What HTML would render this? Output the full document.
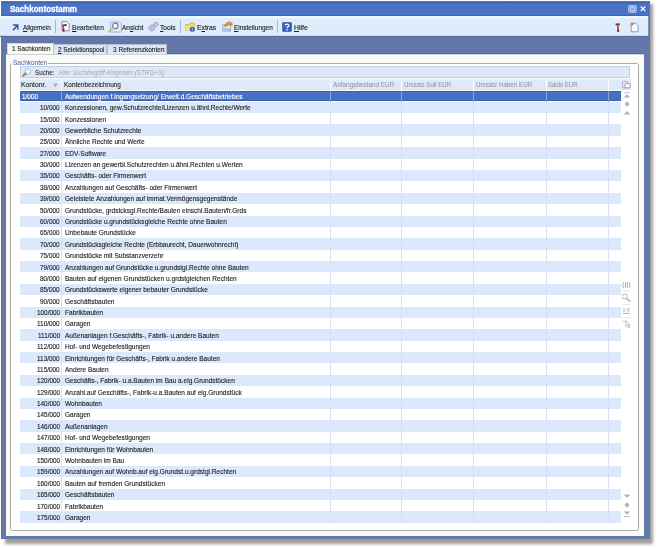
<!DOCTYPE html>
<html><head><meta charset="utf-8">
<style>
*{margin:0;padding:0;box-sizing:border-box}
html,body{width:658px;height:548px;overflow:hidden;background:#fff;font-family:"Liberation Sans",sans-serif}
.a{position:absolute}
.tx{position:absolute;white-space:nowrap;font-size:7px;line-height:normal;transform-origin:0 0;-webkit-text-stroke:0.13px currentColor}
#shadow{position:absolute;left:4.5px;top:4.2px;width:648.6px;height:539.6px;background:rgba(70,62,60,.5);filter:blur(1.8px)}
#win{position:absolute;left:1.3px;top:1.3px;width:648.4px;height:538.2px;background:#6378a8}
#title{position:absolute;left:1.3px;top:1.6px;width:648px;height:14.4px;background:linear-gradient(#3e62ac 0,#3e62ac 1px,#4774c8 1.6px,#4873c7 12.8px,#3f64aa 13.6px,#4266ae 14.4px)}
#tb{position:absolute;left:0;top:16px;width:649.3px;height:21px;background:linear-gradient(#eef9ff 0,#f0fbff 1.6px,#deecfc 2.6px,#deecfc 18.4px,#e8f9ff 19.2px,#5a6e9f 20.4px,#586c9e 21px)}
.sep{position:absolute;width:1px;background:#aab6ca}
#panel{position:absolute;left:6.2px;top:53px;width:638px;height:483.1px;background:linear-gradient(#58698f 0,#58698f 0.8px,#fdfefd 1.8px,#fbfbf5 3.2px,#fbfaf4 100%)}
.tab{position:absolute;background:linear-gradient(#d9e3f3,#e3eaf7);border:1px solid #b3c1d8;border-bottom:none}
#tab1{background:#fbfaf5;border:1px solid #cfd6e0;border-bottom:none}
#grp{position:absolute;left:10.4px;top:63.3px;width:628.2px;height:467.4px;border:1px solid #aaacaa;border-radius:2.5px;background:#fff}
#grpcover{position:absolute;left:12.3px;top:59px;width:35.8px;height:4.8px;background:#fcfbf7}
#search{position:absolute;left:19.8px;top:66.4px;width:610px;height:11.4px;background:#dfe8f6;border:1px solid #c1d1ea}
#hdr{position:absolute;left:20.1px;top:77.8px;width:611px;height:12.7px;background:linear-gradient(#f4f9ff 0,#f4f9ff 0.8px,#dfeafa 2px,#dce8f9 100%)}
.hv{position:absolute;top:78.6px;width:1px;height:11.6px;background:#fbfdff}
#gridbg{position:absolute;left:20.1px;top:90.5px;width:601.1px;height:432.9px;background:#fff}
.rodd{position:absolute;left:20.1px;width:601.1px;height:11.38px;background:#dce9fc}
.rsel{position:absolute;left:20.1px;width:601.1px;background:#4571c5;border-top:1px solid #3a5eac;border-bottom:1px solid #3a5eac}
.vl{position:absolute;top:90.5px;width:0.9px;background:#d6e2f4}
.vls{position:absolute;top:90.5px;width:1px;background:#8aa6dc}
u{text-decoration:underline;text-underline-offset:1px;text-decoration-thickness:0.6px}

</style></head><body>
<div id="shadow"></div>
<div id="win"></div>
<div id="title"></div>
<svg class="a" style="left:627.6px;top:4.8px" width="9" height="8" viewBox="0 0 9 8"><rect x="0.5" y="0.5" width="7.8" height="7" rx="1" fill="#86a3dc" stroke="#b9cbef" stroke-width="0.9"/><rect x="2.4" y="2.3" width="4" height="3.4" rx="1.3" fill="none" stroke="#dfe8fa" stroke-width="0.9"/></svg>
<svg class="a" style="left:639.9px;top:6.3px" width="6" height="5.5" viewBox="0 0 6 5.5"><path d="M0.7 0.5 L5.3 5 M5.3 0.5 L0.7 5" stroke="#fff" stroke-width="1.05"/></svg>
<div id="tb"></div>
<div class="a" style="left:648.4px;top:16px;width:1px;height:20px;background:#7b90bf"></div>
<div class="sep" style="left:55.2px;top:19.5px;height:13.3px"></div>
<div class="sep" style="left:180.2px;top:19.5px;height:13.3px"></div>
<div class="sep" style="left:277.2px;top:19.5px;height:13.3px"></div>
<!-- arrow icon -->
<svg class="a" style="left:12.4px;top:23.6px" width="7.5" height="7" viewBox="0 0 7.5 7"><path d="M0.5 0.3 H6.6 V6.2 L5 5.2 V1.9 H1.6 Z" fill="#3d60b6"/><path d="M5.2 1.7 L1 6.2" stroke="#2f4b94" stroke-width="1.5"/></svg>
<!-- bearbeiten icon -->
<svg class="a" style="left:60.6px;top:21.3px" width="9" height="11" viewBox="0 0 9 11"><path d="M1 0.6 H5.8 L8.2 3 V9.8 H1 Z" fill="#fafcff" stroke="#7d8aa4" stroke-width="0.9"/><path d="M1.2 4.2 H4.4" stroke="#3e3e3e" stroke-width="1.4"/><circle cx="4.6" cy="4" r="1" fill="#222"/><path d="M2.2 4.8 L2.6 10.2" stroke="#c9452c" stroke-width="1.7" stroke-linecap="round"/><path d="M2.45 8 L2.6 10.2" stroke="#8e2a1a" stroke-width="1.5"/></svg>
<!-- ansicht icon -->
<svg class="a" style="left:106.5px;top:20.5px" width="15" height="12" viewBox="0 0 15 12"><path d="M3.6 1 H12.4 L14.4 3 V11 H3.6 Z" fill="#e4eaf7" stroke="#a2aed0" stroke-width="0.9"/><circle cx="8.3" cy="4.9" r="2.7" fill="#f6f9ff" stroke="#6e7b9e" stroke-width="1.2"/><path d="M5.8 7.4 L2.4 10.3" stroke="#d5be76" stroke-width="2.6" stroke-linecap="round"/></svg>
<!-- tools icon -->
<svg class="a" style="left:147.8px;top:21.8px" width="11" height="10" viewBox="0 0 11 10"><circle cx="3.9" cy="5.9" r="3" fill="#c9c6e4" stroke="#8c88b4" stroke-width="0.9" stroke-dasharray="1.3 0.7"/><circle cx="3.9" cy="5.9" r="0.8" fill="#9995c0"/><circle cx="8" cy="2.3" r="1.9" fill="#dcdaf0" stroke="#8985b2" stroke-width="1.1" stroke-dasharray="1.1 0.5"/></svg>
<!-- extras icon -->
<svg class="a" style="left:184.8px;top:21.6px" width="10.5" height="10" viewBox="0 0 10.5 10"><path d="M0.5 2.5 H3.8 L4.8 1.2 H9.5 V8.6 H0.5 Z" fill="#f2d36a" stroke="#d2ac3c" stroke-width="0.7"/><path d="M0.5 4 H9.5 V8.6 H0.5Z" fill="#f7e08a"/><circle cx="7.3" cy="7.2" r="2.5" fill="#1f62c9"/><path d="M7.3 6.2 V8.3" stroke="#fff" stroke-width="0.8"/></svg>
<!-- einstellungen icon -->
<svg class="a" style="left:221.5px;top:21.4px" width="11" height="10.5" viewBox="0 0 11 10.5"><rect x="0.8" y="3.8" width="7.8" height="6.2" fill="#e9eef8" stroke="#8a97b2" stroke-width="0.8"/><rect x="1.4" y="7.2" width="6.6" height="2.4" fill="#a9c0e6"/><path d="M2.6 5.6 C3.2 2.6 5.2 0.9 7.4 1 C9.2 1.1 10.3 2.3 10.6 3.6 L9.6 4.2 C8 3.2 5.5 3.8 3.6 5.8 Z" fill="#dc9a22" stroke="#9b6a14" stroke-width="0.5"/></svg>
<!-- hilfe icon -->
<svg class="a" style="left:282px;top:21.8px" width="10" height="10" viewBox="0 0 10 10"><rect x="0.4" y="0.4" width="9.2" height="9.2" rx="1" fill="#3561b8" stroke="#284e9c" stroke-width="0.6"/><path d="M3.3 3.6 C3.3 1.6 6.8 1.6 6.8 3.5 C6.8 4.8 5 4.9 5 6.2" fill="none" stroke="#fff" stroke-width="1.3"/><rect x="4.35" y="7.1" width="1.3" height="1.3" fill="#fff"/></svg>
<!-- right toolbar icons -->
<svg class="a" style="left:614.6px;top:22.6px" width="6" height="9.5" viewBox="0 0 6 9.5"><path d="M0.6 1.4 H4.8" stroke="#3c3c3c" stroke-width="1.9"/><path d="M2.8 2.2 L3.3 8.8" stroke="#c9502c" stroke-width="1.8" stroke-linecap="round"/><path d="M3 6.5 L3.3 8.8" stroke="#8a2a18" stroke-width="1.6"/></svg>
<svg class="a" style="left:629.5px;top:22.2px" width="9" height="10.5" viewBox="0 0 9 10.5"><path d="M1.2 1.2 H5.6 L8.2 3.8 V9.8 H1.2 Z" fill="#f4f8ff" stroke="#7f93b8" stroke-width="0.9"/><circle cx="2.2" cy="2" r="1.6" fill="#e8852a"/></svg>
<div id="panel"></div>
<div class="tab" id="tab1" style="left:6.5px;top:42.5px;width:47px;height:11.6px"></div>
<div class="tab" style="left:53.4px;top:44px;width:54px;height:10px"></div>
<div class="tab" style="left:107.3px;top:44px;width:60px;height:10px"></div>
<div id="grp"></div>
<div id="grpcover"></div>
<div id="search"></div>
<svg class="a" style="left:21.8px;top:68.4px" width="9.5" height="8.5" viewBox="0 0 9.5 8.5"><circle cx="5.6" cy="3.6" r="2.9" fill="#eef8fd" stroke="#8fb0c8" stroke-width="0.8"/><path d="M6.6 1.6 A2.2 2.2 0 0 1 7.4 4.6" fill="none" stroke="#ffffff" stroke-width="0.8"/><path d="M3.6 5.6 L1.3 7.7" stroke="#b7864f" stroke-width="2.3" stroke-linecap="round"/></svg>
<div id="hdr"></div>
<div id="gridbg"></div>
<svg class="a" style="left:52.6px;top:83.3px" width="5" height="4.5" viewBox="0 0 5 4.5"><path d="M0.2 0.4 H4.8 L2.5 4.2 Z" fill="#a4a8ae"/></svg>
<svg class="a" style="left:621.8px;top:81px" width="9" height="7.5" viewBox="0 0 9 7.5"><rect x="0.6" y="0.6" width="5" height="6.2" rx="0.8" fill="#eef0f4" stroke="#9a9a9a" stroke-width="0.8"/><rect x="3" y="2.6" width="5.2" height="4.2" rx="0.6" fill="#fdfdfd" stroke="#858585" stroke-width="0.8"/></svg>
<!-- nav buttons top -->
<svg class="a" style="left:622.5px;top:91.7px" width="8" height="6" viewBox="0 0 8 6"><path d="M1 0.8 H7" stroke="#b8b8b8" stroke-width="0.9"/><path d="M0.8 5.4 L4 2.2 L7.2 5.4 Z" fill="#b0b0b0"/></svg>
<svg class="a" style="left:622.5px;top:101.2px" width="8" height="6" viewBox="0 0 8 6"><path d="M4 0.3 L6.5 3 L4 5.7 L1.5 3 Z" fill="#b0b0b0"/></svg>
<svg class="a" style="left:622.5px;top:109.8px" width="8" height="5" viewBox="0 0 8 5"><path d="M0.8 4.4 L4 1 L7.2 4.4 Z" fill="#b0b0b0"/></svg>
<!-- mid icons -->
<svg class="a" style="left:622.2px;top:281.2px" width="9" height="48" viewBox="0 0 9 48"><path d="M1.6 1 C0.7 2.5 0.7 5.5 1.6 7 M7.2 1 C8.1 2.5 8.1 5.5 7.2 7 M3.5 1.2 V6.8 M5.3 1.2 V6.8" fill="none" stroke="#b0b0b0" stroke-width="1"/><path d="M0.5 10.1 H8.2" stroke="#d8d8d8" stroke-width="0.6"/><circle cx="2.8" cy="15.4" r="2.5" fill="none" stroke="#b0b0b0" stroke-width="0.9"/><path d="M4.6 17.2 L8.2 20.8" stroke="#aaaaaa" stroke-width="1.3"/><path d="M0.5 23.5 H8.2" stroke="#e2d0d0" stroke-width="0.6"/><path d="M1 28 H3.4 M4.6 28 H7.8 M1 30 H3.4 M4.6 30 H7.8 M1 32.4 H7.8" fill="none" stroke="#b8b8b8" stroke-width="1"/><path d="M0.5 36.8 H8.2" stroke="#d8d8d8" stroke-width="0.6"/><path d="M0.8 40.2 H5.4 L3.8 42.4 V46 M5.2 43 H8.2 M5.2 44.6 H8.2 M5.2 46.2 H8.2" fill="none" stroke="#b4b4b4" stroke-width="0.9"/></svg>
<!-- nav buttons bottom -->
<svg class="a" style="left:622.5px;top:493.5px" width="8" height="5" viewBox="0 0 8 5"><path d="M0.8 0.6 L4 4 L7.2 0.6 Z" fill="#b0b0b0"/></svg>
<svg class="a" style="left:622.5px;top:502.2px" width="8" height="6" viewBox="0 0 8 6"><path d="M4 0.3 L6.5 3 L4 5.7 L1.5 3 Z" fill="#b0b0b0"/></svg>
<svg class="a" style="left:622.5px;top:510.8px" width="8" height="6.5" viewBox="0 0 8 6.5"><path d="M0.8 0.6 L4 3.8 L7.2 0.6 Z" fill="#b0b0b0"/><path d="M1 5.6 H7" stroke="#b0b0b0" stroke-width="0.9"/></svg>

<div class="rsel" style="top:90.5px;height:10.72px"></div><div class="rodd" style="top:101.72px"></div><div class="rodd" style="top:124.48px"></div><div class="rodd" style="top:147.24px"></div><div class="rodd" style="top:170.00px"></div><div class="rodd" style="top:192.76px"></div><div class="rodd" style="top:215.52px"></div><div class="rodd" style="top:238.28px"></div><div class="rodd" style="top:261.04px"></div><div class="rodd" style="top:283.80px"></div><div class="rodd" style="top:306.56px"></div><div class="rodd" style="top:329.32px"></div><div class="rodd" style="top:352.08px"></div><div class="rodd" style="top:374.84px"></div><div class="rodd" style="top:397.60px"></div><div class="rodd" style="top:420.36px"></div><div class="rodd" style="top:443.12px"></div><div class="rodd" style="top:465.88px"></div><div class="rodd" style="top:488.64px"></div><div class="rodd" style="top:511.40px"></div>
<div class="vl" style="left:61.1px;height:432.3px"></div><div class="vl" style="left:329.8px;height:432.3px"></div><div class="vl" style="left:401.3px;height:432.3px"></div><div class="vl" style="left:473.4px;height:432.3px"></div><div class="vl" style="left:545.5px;height:432.3px"></div><div class="vl" style="left:607.9px;height:432.3px"></div>
<div class="vls" style="left:61.1px;height:11.22px"></div><div class="vls" style="left:329.8px;height:11.22px"></div><div class="vls" style="left:401.3px;height:11.22px"></div><div class="vls" style="left:473.4px;height:11.22px"></div><div class="vls" style="left:545.5px;height:11.22px"></div><div class="vls" style="left:607.9px;height:11.22px"></div>
<div class="hv" style="left:61.1px"></div><div class="hv" style="left:329.8px"></div><div class="hv" style="left:401.3px"></div><div class="hv" style="left:473.4px"></div><div class="hv" style="left:545.5px"></div><div class="hv" style="left:607.9px"></div>
<span class="tx" style="left:10.14px;top:4.88px;font-size:8.2px;color:#ffffff;transform:scaleX(0.9820);font-weight:bold;-webkit-text-stroke:0.3px #fff">Sachkontostamm</span><span class="tx" style="left:22.54px;top:23.86px;font-size:7.0px;color:#1e1e1e;transform:scaleX(0.9015);"><u>A</u>llgemein</span><span class="tx" style="left:72.12px;top:23.86px;font-size:7.0px;color:#1e1e1e;transform:scaleX(0.9403);"><u>B</u>earbeiten</span><span class="tx" style="left:121.63px;top:23.86px;font-size:7.0px;color:#1e1e1e;transform:scaleX(0.9292);">An<u>s</u>icht</span><span class="tx" style="left:160.12px;top:23.86px;font-size:7.0px;color:#1e1e1e;transform:scaleX(0.9522);"><u>T</u>ools</span><span class="tx" style="left:197.11px;top:23.86px;font-size:7.0px;color:#1e1e1e;transform:scaleX(0.9714);">E<u>x</u>tras</span><span class="tx" style="left:233.63px;top:23.86px;font-size:7.0px;color:#1e1e1e;transform:scaleX(0.9213);"><u>E</u>instellungen</span><span class="tx" style="left:293.61px;top:23.86px;font-size:7.0px;color:#1e1e1e;transform:scaleX(0.9837);"><u>H</u>ilfe</span><span class="tx" style="left:11.74px;top:44.95px;font-size:6.8px;color:#1e1e1e;transform:scaleX(0.9289);">1 Sachkonten</span><span class="tx" style="left:58.24px;top:45.65px;font-size:6.8px;color:#1e1e1e;transform:scaleX(0.9325);"><u>2</u> Selektionspool</span><span class="tx" style="left:112.63px;top:45.65px;font-size:6.8px;color:#1e1e1e;transform:scaleX(0.9607);">3 Referenzkonten</span><span class="tx" style="left:12.83px;top:58.55px;font-size:6.8px;color:#5068aa;transform:scaleX(0.9508);-webkit-text-stroke:0.05px #5068aa">Sachkonten</span><span class="tx" style="left:34.54px;top:68.95px;font-size:6.8px;color:#202020;transform:scaleX(0.9218);-webkit-text-stroke:0.05px #202020">Suche:</span><span class="tx" style="left:58.64px;top:68.95px;font-size:6.8px;color:#a3abb9;transform:scaleX(0.9388);font-style:italic;-webkit-text-stroke:0">Hier Suchbegriff eingeben (STRG+S)</span><span class="tx" style="left:21.01px;top:80.85px;font-size:6.8px;color:#2a2a2a;transform:scaleX(1.0020);">Kontonr.</span><span class="tx" style="left:64.13px;top:80.95px;font-size:6.8px;color:#2a2a2a;transform:scaleX(0.9475);">Kontenbezeichnung</span><span class="tx" style="left:333.04px;top:80.85px;font-size:6.8px;color:#949494;transform:scaleX(0.9381);-webkit-text-stroke:0.05px #949494">Anfangsbestand EUR</span><span class="tx" style="left:404.45px;top:80.85px;font-size:6.8px;color:#949494;transform:scaleX(0.8971);-webkit-text-stroke:0.05px #949494">Umsatz Soll EUR</span><span class="tx" style="left:476.44px;top:80.85px;font-size:6.8px;color:#949494;transform:scaleX(0.9185);-webkit-text-stroke:0.05px #949494">Umsatz Haben EUR</span><span class="tx" style="left:548.46px;top:80.85px;font-size:6.8px;color:#949494;transform:scaleX(0.8798);-webkit-text-stroke:0.05px #949494">Saldo EUR</span>
<span class="tx" style="left:22.25px;top:91.83px;font-size:7.3px;color:#ffffff;transform:scaleX(0.8774)">1/000</span><span class="tx" style="left:64.74px;top:91.83px;font-size:7.3px;color:#ffffff;transform:scaleX(0.8966)">Aufwendungen f.Ingangsetzung/ Erweit.d.Geschäftsbetriebes</span><span class="tx" style="left:40.46px;top:103.21px;font-size:7.3px;color:#1e1e1e;transform:scaleX(0.8774)">10/000</span><span class="tx" style="left:64.74px;top:103.21px;font-size:7.3px;color:#1e1e1e;transform:scaleX(0.8966)">Konzessionen, gew.Schutzrechte/Lizenzen u.ähnl.Rechte/Werte</span><span class="tx" style="left:40.46px;top:114.59px;font-size:7.3px;color:#1e1e1e;transform:scaleX(0.8774)">15/000</span><span class="tx" style="left:64.74px;top:114.59px;font-size:7.3px;color:#1e1e1e;transform:scaleX(0.8966)">Konzessionen</span><span class="tx" style="left:40.46px;top:125.97px;font-size:7.3px;color:#1e1e1e;transform:scaleX(0.8774)">20/000</span><span class="tx" style="left:64.74px;top:125.97px;font-size:7.3px;color:#1e1e1e;transform:scaleX(0.8966)">Gewerbliche Schutzrechte</span><span class="tx" style="left:40.46px;top:137.35px;font-size:7.3px;color:#1e1e1e;transform:scaleX(0.8774)">25/000</span><span class="tx" style="left:64.74px;top:137.35px;font-size:7.3px;color:#1e1e1e;transform:scaleX(0.8966)">Ähnliche Rechte und Werte</span><span class="tx" style="left:40.46px;top:148.73px;font-size:7.3px;color:#1e1e1e;transform:scaleX(0.8774)">27/000</span><span class="tx" style="left:64.74px;top:148.73px;font-size:7.3px;color:#1e1e1e;transform:scaleX(0.8966)">EDV-Software</span><span class="tx" style="left:40.46px;top:160.11px;font-size:7.3px;color:#1e1e1e;transform:scaleX(0.8774)">30/000</span><span class="tx" style="left:64.74px;top:160.11px;font-size:7.3px;color:#1e1e1e;transform:scaleX(0.8966)">Lizenzen an gewerbl.Schutzrechten u.ähnl.Rechten u.Werten</span><span class="tx" style="left:40.46px;top:171.49px;font-size:7.3px;color:#1e1e1e;transform:scaleX(0.8774)">35/000</span><span class="tx" style="left:64.74px;top:171.49px;font-size:7.3px;color:#1e1e1e;transform:scaleX(0.8966)">Geschäfts- oder Firmenwert</span><span class="tx" style="left:40.46px;top:182.87px;font-size:7.3px;color:#1e1e1e;transform:scaleX(0.8774)">38/000</span><span class="tx" style="left:64.74px;top:182.87px;font-size:7.3px;color:#1e1e1e;transform:scaleX(0.8966)">Anzahlungen auf Geschäfts- oder Firmenwert</span><span class="tx" style="left:40.46px;top:194.25px;font-size:7.3px;color:#1e1e1e;transform:scaleX(0.8774)">39/000</span><span class="tx" style="left:64.74px;top:194.25px;font-size:7.3px;color:#1e1e1e;transform:scaleX(0.8966)">Geleistete Anzahlungen auf immat.Vermögensgegenstände</span><span class="tx" style="left:40.46px;top:205.63px;font-size:7.3px;color:#1e1e1e;transform:scaleX(0.8774)">50/000</span><span class="tx" style="left:64.74px;top:205.63px;font-size:7.3px;color:#1e1e1e;transform:scaleX(0.8966)">Grundstücke, grdstcksgl.Rechte/Bauten einschl.Bauten/fr.Grds</span><span class="tx" style="left:40.46px;top:217.01px;font-size:7.3px;color:#1e1e1e;transform:scaleX(0.8774)">60/000</span><span class="tx" style="left:64.74px;top:217.01px;font-size:7.3px;color:#1e1e1e;transform:scaleX(0.8966)">Grundstücke u.grundstücksgleiche Rechte ohne Bauten</span><span class="tx" style="left:40.46px;top:228.39px;font-size:7.3px;color:#1e1e1e;transform:scaleX(0.8774)">65/000</span><span class="tx" style="left:64.74px;top:228.39px;font-size:7.3px;color:#1e1e1e;transform:scaleX(0.8966)">Unbebaute Grundstücke</span><span class="tx" style="left:40.46px;top:239.77px;font-size:7.3px;color:#1e1e1e;transform:scaleX(0.8774)">70/000</span><span class="tx" style="left:64.74px;top:239.77px;font-size:7.3px;color:#1e1e1e;transform:scaleX(0.8966)">Grundstücksgleiche Rechte (Erbbaurecht, Dauerwohnrecht)</span><span class="tx" style="left:40.46px;top:251.15px;font-size:7.3px;color:#1e1e1e;transform:scaleX(0.8774)">75/000</span><span class="tx" style="left:64.74px;top:251.15px;font-size:7.3px;color:#1e1e1e;transform:scaleX(0.8966)">Grundstücke mit Substanzverzehr</span><span class="tx" style="left:40.46px;top:262.53px;font-size:7.3px;color:#1e1e1e;transform:scaleX(0.8774)">79/000</span><span class="tx" style="left:64.74px;top:262.53px;font-size:7.3px;color:#1e1e1e;transform:scaleX(0.8966)">Anzahlungen auf Grundstücke u.grundstgl.Rechte ohne Bauten</span><span class="tx" style="left:40.46px;top:273.91px;font-size:7.3px;color:#1e1e1e;transform:scaleX(0.8774)">80/000</span><span class="tx" style="left:64.74px;top:273.91px;font-size:7.3px;color:#1e1e1e;transform:scaleX(0.8966)">Bauten auf eigenen Grundstücken u.grdstgleichen Rechten</span><span class="tx" style="left:40.46px;top:285.29px;font-size:7.3px;color:#1e1e1e;transform:scaleX(0.8774)">85/000</span><span class="tx" style="left:64.74px;top:285.29px;font-size:7.3px;color:#1e1e1e;transform:scaleX(0.8966)">Grundstückswerte eigener bebauter Grundstücke</span><span class="tx" style="left:40.46px;top:296.67px;font-size:7.3px;color:#1e1e1e;transform:scaleX(0.8774)">90/000</span><span class="tx" style="left:64.74px;top:296.67px;font-size:7.3px;color:#1e1e1e;transform:scaleX(0.8966)">Geschäftsbauten</span><span class="tx" style="left:36.90px;top:308.05px;font-size:7.3px;color:#1e1e1e;transform:scaleX(0.8774)">100/000</span><span class="tx" style="left:64.74px;top:308.05px;font-size:7.3px;color:#1e1e1e;transform:scaleX(0.8966)">Fabrikbauten</span><span class="tx" style="left:37.38px;top:319.43px;font-size:7.3px;color:#1e1e1e;transform:scaleX(0.8774)">110/000</span><span class="tx" style="left:64.74px;top:319.43px;font-size:7.3px;color:#1e1e1e;transform:scaleX(0.8966)">Garagen</span><span class="tx" style="left:37.86px;top:330.81px;font-size:7.3px;color:#1e1e1e;transform:scaleX(0.8774)">111/000</span><span class="tx" style="left:64.74px;top:330.81px;font-size:7.3px;color:#1e1e1e;transform:scaleX(0.8966)">Außenanlagen f.Geschäfts-, Fabrik- u.andere Bauten</span><span class="tx" style="left:37.38px;top:342.19px;font-size:7.3px;color:#1e1e1e;transform:scaleX(0.8774)">112/000</span><span class="tx" style="left:64.74px;top:342.19px;font-size:7.3px;color:#1e1e1e;transform:scaleX(0.8966)">Hof- und Wegebefestigungen</span><span class="tx" style="left:37.38px;top:353.57px;font-size:7.3px;color:#1e1e1e;transform:scaleX(0.8774)">113/000</span><span class="tx" style="left:64.74px;top:353.57px;font-size:7.3px;color:#1e1e1e;transform:scaleX(0.8966)">Einrichtungen für Geschäfts-, Fabrik u.andere Bauten</span><span class="tx" style="left:37.38px;top:364.95px;font-size:7.3px;color:#1e1e1e;transform:scaleX(0.8774)">115/000</span><span class="tx" style="left:64.74px;top:364.95px;font-size:7.3px;color:#1e1e1e;transform:scaleX(0.8966)">Andere Bauten</span><span class="tx" style="left:36.90px;top:376.33px;font-size:7.3px;color:#1e1e1e;transform:scaleX(0.8774)">120/000</span><span class="tx" style="left:64.74px;top:376.33px;font-size:7.3px;color:#1e1e1e;transform:scaleX(0.8966)">Geschäfts-, Fabrik- u.a.Bauten im Bau a.eig.Grundstücken</span><span class="tx" style="left:36.90px;top:387.71px;font-size:7.3px;color:#1e1e1e;transform:scaleX(0.8774)">129/000</span><span class="tx" style="left:64.74px;top:387.71px;font-size:7.3px;color:#1e1e1e;transform:scaleX(0.8966)">Anzahl.auf Geschäfts-, Fabrik-u.a.Bauten auf eig.Grundstück</span><span class="tx" style="left:36.90px;top:399.09px;font-size:7.3px;color:#1e1e1e;transform:scaleX(0.8774)">140/000</span><span class="tx" style="left:64.74px;top:399.09px;font-size:7.3px;color:#1e1e1e;transform:scaleX(0.8966)">Wohnbauten</span><span class="tx" style="left:36.90px;top:410.47px;font-size:7.3px;color:#1e1e1e;transform:scaleX(0.8774)">145/000</span><span class="tx" style="left:64.74px;top:410.47px;font-size:7.3px;color:#1e1e1e;transform:scaleX(0.8966)">Garagen</span><span class="tx" style="left:36.90px;top:421.85px;font-size:7.3px;color:#1e1e1e;transform:scaleX(0.8774)">146/000</span><span class="tx" style="left:64.74px;top:421.85px;font-size:7.3px;color:#1e1e1e;transform:scaleX(0.8966)">Außenanlagen</span><span class="tx" style="left:36.90px;top:433.23px;font-size:7.3px;color:#1e1e1e;transform:scaleX(0.8774)">147/000</span><span class="tx" style="left:64.74px;top:433.23px;font-size:7.3px;color:#1e1e1e;transform:scaleX(0.8966)">Hof- und Wegebefestigungen</span><span class="tx" style="left:36.90px;top:444.61px;font-size:7.3px;color:#1e1e1e;transform:scaleX(0.8774)">148/000</span><span class="tx" style="left:64.74px;top:444.61px;font-size:7.3px;color:#1e1e1e;transform:scaleX(0.8966)">Einrichtungen für Wohnbauten</span><span class="tx" style="left:36.90px;top:455.99px;font-size:7.3px;color:#1e1e1e;transform:scaleX(0.8774)">150/000</span><span class="tx" style="left:64.74px;top:455.99px;font-size:7.3px;color:#1e1e1e;transform:scaleX(0.8966)">Wohnbauten im Bau</span><span class="tx" style="left:36.90px;top:467.37px;font-size:7.3px;color:#1e1e1e;transform:scaleX(0.8774)">159/000</span><span class="tx" style="left:64.74px;top:467.37px;font-size:7.3px;color:#1e1e1e;transform:scaleX(0.8966)">Anzahlungen auf Wohnb.auf eig.Grundst.u.grdstgl.Rechten</span><span class="tx" style="left:36.90px;top:478.75px;font-size:7.3px;color:#1e1e1e;transform:scaleX(0.8774)">160/000</span><span class="tx" style="left:64.74px;top:478.75px;font-size:7.3px;color:#1e1e1e;transform:scaleX(0.8966)">Bauten auf fremden Grundstücken</span><span class="tx" style="left:36.90px;top:490.13px;font-size:7.3px;color:#1e1e1e;transform:scaleX(0.8774)">165/000</span><span class="tx" style="left:64.74px;top:490.13px;font-size:7.3px;color:#1e1e1e;transform:scaleX(0.8966)">Geschäftsbauten</span><span class="tx" style="left:36.90px;top:501.51px;font-size:7.3px;color:#1e1e1e;transform:scaleX(0.8774)">170/000</span><span class="tx" style="left:64.74px;top:501.51px;font-size:7.3px;color:#1e1e1e;transform:scaleX(0.8966)">Fabrikbauten</span><span class="tx" style="left:36.90px;top:512.89px;font-size:7.3px;color:#1e1e1e;transform:scaleX(0.8774)">175/000</span><span class="tx" style="left:64.74px;top:512.89px;font-size:7.3px;color:#1e1e1e;transform:scaleX(0.8966)">Garagen</span>
</body></html>
